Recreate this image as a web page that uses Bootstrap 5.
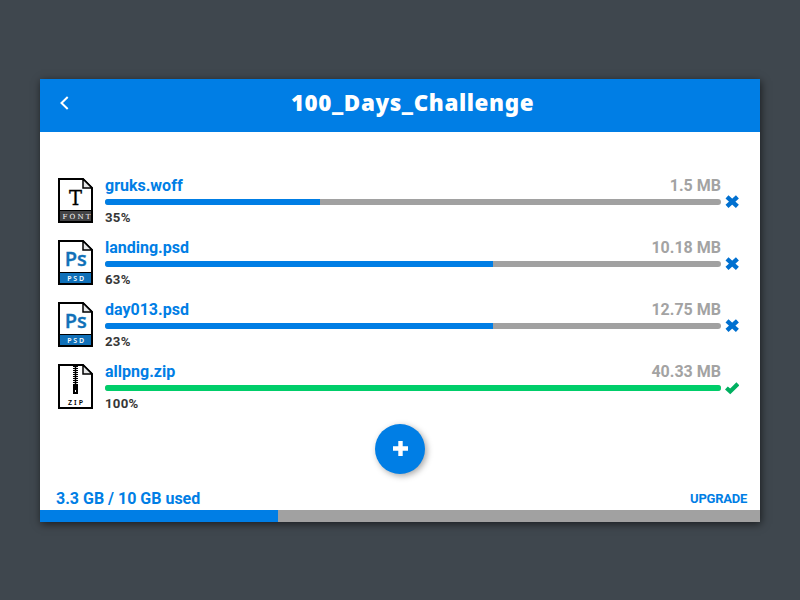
<!DOCTYPE html>
<html lang="en">
<head>
<meta charset="utf-8">
<meta name="viewport" content="width=device-width, initial-scale=1">
<title>100_Days_Challenge</title>
<link rel="stylesheet" href="https://cdn.jsdelivr.net/npm/bootstrap@5.3.0/dist/css/bootstrap.min.css">
<style>
body{background:#3f474e;font-family:Roboto,sans-serif;height:600px;overflow:hidden;padding-top:79px}
.uploader{width:720px;height:443px;box-shadow:1px 2px 8px rgba(0,0,0,.6)}
.topbar{height:53px;background:#007ee5;padding:0 19px}
.topbar h1{font:900 22.4px/47px "Noto Sans",sans-serif;letter-spacing:.6px;margin:0;padding-left:16px;padding-right:0;height:53px}
.topbar h1{padding-right:1px}
.files{padding:46px 19px 0 18px}
.file-row{height:62px}
.file-icon{width:35px;height:45px;display:block;flex:none}
.file-info{width:616px;margin-left:12px;margin-top:-2px}
.file-name{font-size:16px;line-height:19px;font-weight:700;color:#007ee5}
.file-size{color:#a3a3a3}
.file-bar{height:6px;border-radius:3px;background:#a1a1a1;margin-top:4px}
.file-bar .progress-bar{background:#007ee5;transition:none}
.file-bar .done{background:#00ce6a}
.file-pct{font-size:13.2px;line-height:15px;font-weight:700;color:#363636;margin-top:5px;letter-spacing:.3px}
.state{width:14px;height:14px;margin-top:17px;margin-left:4px;display:block;flex:none}
.add{width:50px;height:50px;background:#007ee5;box-shadow:2px 2px 6px rgba(0,0,0,.35);margin-top:-2px}
.usage{color:#007ee5;font-size:16px;line-height:19px;padding:0 13px 2px 16px;font-weight:700}
.usage a{font-size:13px;color:#007ee5;letter-spacing:-.25px}
.quota{height:12px;background:#a1a1a1}
.quota .progress-bar{background:#007ee5;transition:none}
</style>
<script src="https://cdn.jsdelivr.net/npm/bootstrap@5.3.0/dist/js/bootstrap.bundle.min.js"></script>
</head>
<body>
<svg class="d-none">
  <symbol id="page" viewBox="0 0 35 45"><path d="M1 1H25L34 10V44H1Z" fill="#fff" stroke="#000" stroke-width="2"/><path d="M25 1V10H34Z" fill="#e6e7e8" stroke="#000" stroke-width="1.5"/></symbol>
  <symbol id="psd" viewBox="0 0 35 45"><use href="#page"/><path d="M2 33H33V43H2Z" fill="#1070b8"/><path d="M1 32.5H34" stroke="#000"/>
    <text x="17.7" y="26.3" text-anchor="middle" font-family="Open Sans,sans-serif" font-weight="600" font-size="20" fill="#1070b8" stroke="#1070b8" stroke-width=".4">Ps</text>
    <text x="18.5" y="41" text-anchor="middle" font-family="Noto Sans,sans-serif" font-weight="600" font-size="7" letter-spacing="1.8" fill="#fff">PSD</text></symbol>
  <symbol id="cross" viewBox="0 0 14 14"><path d="M2 1.9L12.4 11.4M12.4 1.9L2 11.4" stroke="#0070d0" stroke-width="4.4"/></symbol>
</svg>
<main class="uploader bg-white mx-auto d-flex flex-column">
  <header class="topbar d-flex align-items-center text-white">
    <svg width="10" height="16" viewBox="0 0 10 16" style="margin-top:-6px"><path d="M8.7 2L2.5 8L8.7 14" fill="none" stroke="#fff" stroke-width="2"/></svg>
    <h1 class="flex-fill text-center">100_Days_Challenge</h1>
  </header>
  <section class="files">
    <div class="file-row d-flex">
      <svg class="file-icon" viewBox="0 0 35 45"><use href="#page"/><path d="M2 33H33V43H2Z" fill="#434345"/><path d="M1 32.5H34" stroke="#000"/><text x="17.5" y="26.5" text-anchor="middle" font-family="DejaVu Serif,serif" font-size="20" textLength="13" lengthAdjust="spacingAndGlyphs" stroke="#000" stroke-width=".3">T</text><text x="4.5" y="41" font-family="DejaVu Serif,serif" font-size="7" textLength="28" fill="#fff">FONT</text></svg>
      <div class="file-info"><div class="file-name d-flex justify-content-between"><span>gruks.woff</span><span class="file-size">1.5 MB</span></div><div class="progress file-bar"><div class="progress-bar" style="width:34.9%"></div></div><div class="file-pct">35%</div></div>
      <svg class="state"><use href="#cross"/></svg>
    </div>
    <div class="file-row d-flex">
      <svg class="file-icon"><use href="#psd"/></svg>
      <div class="file-info"><div class="file-name d-flex justify-content-between"><span>landing.psd</span><span class="file-size">10.18 MB</span></div><div class="progress file-bar"><div class="progress-bar" style="width:63%"></div></div><div class="file-pct">63%</div></div>
      <svg class="state"><use href="#cross"/></svg>
    </div>
    <div class="file-row d-flex">
      <svg class="file-icon"><use href="#psd"/></svg>
      <div class="file-info"><div class="file-name d-flex justify-content-between"><span>day013.psd</span><span class="file-size">12.75 MB</span></div><div class="progress file-bar"><div class="progress-bar" style="width:63%"></div></div><div class="file-pct">23%</div></div>
      <svg class="state"><use href="#cross"/></svg>
    </div>
    <div class="file-row d-flex">
      <svg class="file-icon" viewBox="0 0 35 45"><use href="#page"/><path d="M17.5 2V22" stroke="#000" stroke-width="5" stroke-dasharray="1 1"/><path d="M17.5 2V22" stroke="#000" stroke-width="1.5"/><path d="M15 21H20V30H15Z"/><path d="M17 26H18V28H17Z" fill="#fff"/><text x="18.5" y="41" text-anchor="middle" font-family="Noto Sans,sans-serif" font-weight="600" font-size="7" letter-spacing="2">ZIP</text></svg>
      <div class="file-info"><div class="file-name d-flex justify-content-between"><span>allpng.zip</span><span class="file-size">40.33 MB</span></div><div class="progress file-bar"><div class="progress-bar done" style="width:100%"></div></div><div class="file-pct">100%</div></div>
      <svg class="state" viewBox="0 0 14 14"><path d="M1.4 7L5.2 10.4L12.9 2.8" fill="none" stroke="#00b060" stroke-width="4.2"/></svg>
    </div>
  </section>
  <button class="add btn p-0 border-0 rounded-circle mx-auto d-flex align-items-center justify-content-center" aria-label="Add"><svg width="15" height="15" viewBox="0 0 15 15" style="margin-top:-1px"><path d="M7.5 0V15M0 7.5H15" stroke="#fff" stroke-width="4.4"/></svg></button>
  <footer class="mt-auto">
    <div class="usage d-flex justify-content-between align-items-center"><span>3.3 GB / 10 GB used</span><a class="text-decoration-none" href="#">UPGRADE</a></div>
    <div class="progress quota rounded-0"><div class="progress-bar" style="width:33%"></div></div>
  </footer>
</main>
</body>
</html>
